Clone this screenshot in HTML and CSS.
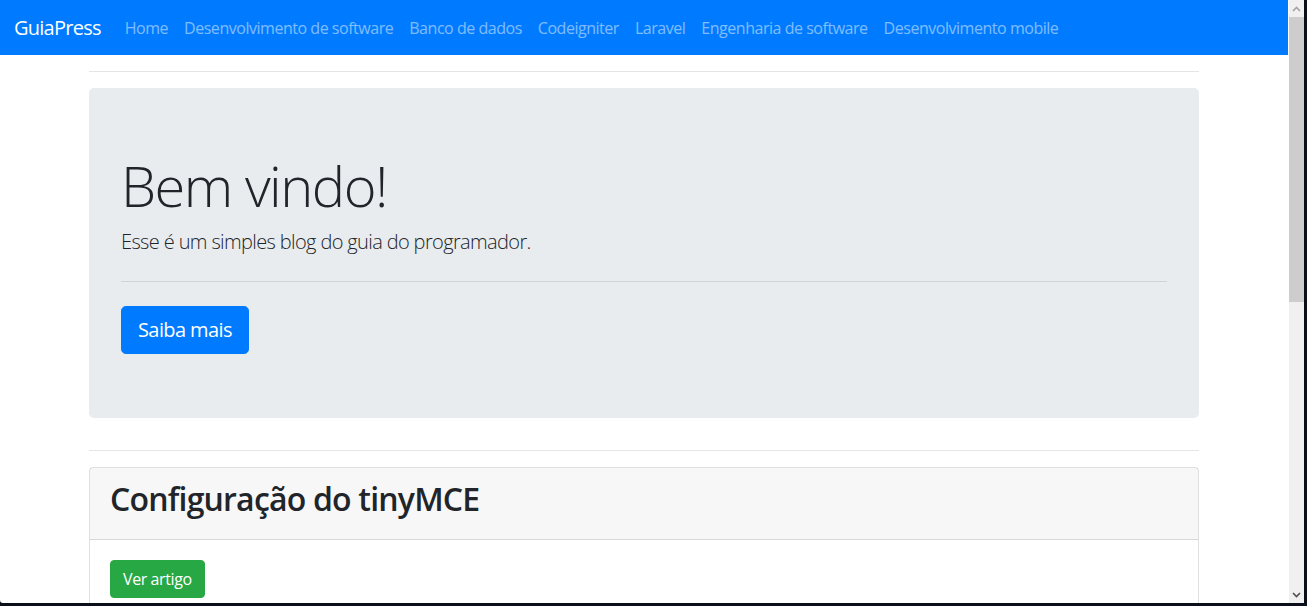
FILE: index.html
```html
<!DOCTYPE html>
<html lang="pt-br">
<head>
<meta charset="utf-8">
<title>GuiaPress</title>
<link rel="stylesheet" href="styles.css">
</head>
<body>
<div class="frame">
  <div class="screen">
    <div class="viewport">
      <nav class="navbar">
        <a class="brand" href="#">GuiaPress</a>
        <ul class="nav">
          <li><a href="#">Home</a></li>
          <li><a href="#">Desenvolvimento de software</a></li>
          <li><a href="#">Banco de dados</a></li>
          <li><a href="#">Codeigniter</a></li>
          <li><a href="#">Laravel</a></li>
          <li><a href="#">Engenharia de software</a></li>
          <li><a href="#">Desenvolvimento mobile</a></li>
        </ul>
      </nav>
      <div class="container">
        <hr class="rule">
        <div class="jumbotron">
          <h1 class="display">Bem vindo!</h1>
          <p class="lead">Esse é um simples blog do guia do programador.</p>
          <hr class="rule inner">
          <a class="btn btn-lg btn-primary" href="#">Saiba mais</a>
        </div>
        <hr class="rule">
        <div class="card">
          <div class="card-header">
            <h2>Configuração do tinyMCE</h2>
          </div>
          <div class="card-body">
            <a class="btn btn-success" href="#">Ver artigo</a>
          </div>
        </div>
      </div>
    </div>
    <div class="scrollbar">
      <div class="sb-arrow">
        <svg width="9" height="6" viewBox="0 0 9 6"><path d="M1 5 L4.5 1.5 L8 5" fill="none" stroke="#a3a3a3" stroke-width="1.6"/></svg>
      </div>
      <div class="sb-thumb"></div>
      <div class="sb-track"></div>
      <div class="sb-arrow">
        <svg width="9" height="6" viewBox="0 0 9 6"><path d="M1 1 L4.5 4.5 L8 1" fill="none" stroke="#505050" stroke-width="1.6"/></svg>
      </div>
    </div>
    <div class="edge-r"></div>
  </div>
  <div class="edge-b"></div>
</div>
</body>
</html>
```

FILE: styles.css
```css
* { box-sizing: border-box; }
html, body { margin: 0; padding: 0; overflow: hidden; }
body {
  background: #0b0f1a;
  font-family: "Open Sans", "Noto Sans", sans-serif;
  color: #212529;
  font-size: 16px;
  line-height: 1.5;
}
.frame { width: 1307px; height: 606px; display: flex; flex-direction: column; }
.screen { display: flex; height: 603px; }
.viewport { flex: 1; background: #fff; overflow: hidden; border-bottom-left-radius: 3px; padding-right: 1px; }
.scrollbar { width: 15px; display: flex; flex-direction: column; background: #f0f0f0; }
.sb-arrow { height: 17px; display: flex; align-items: center; justify-content: center; background: #f0f0f0; }
.sb-thumb { height: 285px; background: #cdcdcd; }
.sb-track { flex: 1; }
.edge-r { width: 3px; background: #0b0f1a; }
.edge-b { height: 3px; background: #0b0f1a; }

.navbar {
  display: flex; align-items: center;
  height: 55px; padding: 0 16px 0 14px;
  background: #007bff;
}
.brand { color: #fff; font-size: 20px; line-height: 30px; text-decoration: none; margin-right: 16px; letter-spacing: -0.75px; }
.nav { display: flex; list-style: none; margin: 0; padding: 0; }
.nav a { display: block; padding: 8px; color: rgba(255,255,255,.5); text-decoration: none; font-size: 16px; line-height: 24px; letter-spacing: -0.47px; }

.container { width: 1140px; margin: 0 auto; padding: 0 15px; }
.rule { border: 0; border-top: 1px solid rgba(0,0,0,.1); margin: 16px 0; }
.rule.inner { margin: 24px 0; }

.jumbotron { background: #e9ecef; border-radius: 4.8px; padding: 64px 32px; margin-bottom: 32px; }
.display { font-size: 56px; font-weight: 300; line-height: 1.2; margin: 0 0 8px; letter-spacing: -1.5px; }
.lead { font-size: 20px; font-weight: 300; margin: 0 0 16px; letter-spacing: -0.63px; }

.btn { display: inline-block; text-decoration: none; color: #fff; border: 1px solid transparent; font-weight: 400; }
.btn-lg { padding: 8px 16px; font-size: 20px; line-height: 30px; border-radius: 4.8px; letter-spacing: -0.6px; }
.btn-primary { background: #007bff; border-color: #007bff; }
.btn-success { background: #28a745; border-color: #28a745; padding: 6px 12px; font-size: 16px; line-height: 24px; border-radius: 4px; letter-spacing: -0.4px; }

.card { border: 1px solid rgba(0,0,0,.125); border-radius: 4px; }
.card-header { background: rgba(0,0,0,.03); border-bottom: 1px solid rgba(0,0,0,.125); padding: 12px 20px; }
.card-header h2 { margin: 0 0 8px; font-size: 32px; font-weight: 600; line-height: 1.2; letter-spacing: -0.8px; }
.card-body { padding: 20px; }
```
